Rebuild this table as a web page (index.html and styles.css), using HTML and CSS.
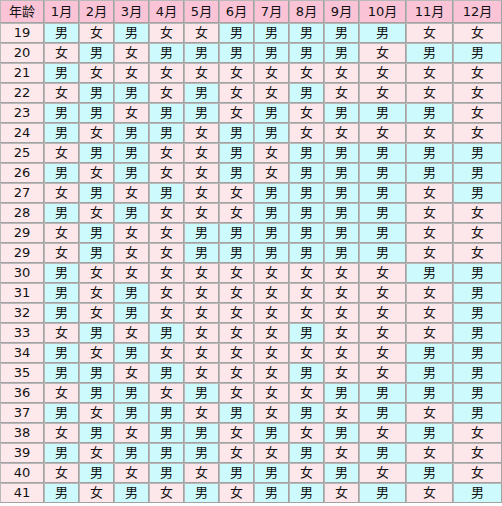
FILE: index.html
```html
<!DOCTYPE html>
<html lang="zh-CN">
<head>
<meta charset="utf-8">
<title>生男生女表</title>
<link rel="stylesheet" href="styles.css">
</head>
<body>
<table class="chart">
<colgroup>
<col class="c-age"><col class="c-m"><col class="c-m"><col class="c-m"><col class="c-m"><col class="c-m"><col class="c-m"><col class="c-m"><col class="c-m"><col class="c-m"><col class="c-w"><col class="c-w"><col class="c-x">
</colgroup>
<thead>
<tr class="head"><th>年龄</th><th>1月</th><th>2月</th><th>3月</th><th>4月</th><th>5月</th><th>6月</th><th>7月</th><th>8月</th><th>9月</th><th>10月</th><th>11月</th><th>12月</th></tr>
</thead>
<tbody>
<tr><td class="age">19</td><td class="m">男</td><td class="f">女</td><td class="m">男</td><td class="f">女</td><td class="f">女</td><td class="m">男</td><td class="m">男</td><td class="m">男</td><td class="m">男</td><td class="m">男</td><td class="f">女</td><td class="f">女</td></tr>
<tr><td class="age">20</td><td class="f">女</td><td class="m">男</td><td class="f">女</td><td class="m">男</td><td class="m">男</td><td class="m">男</td><td class="m">男</td><td class="m">男</td><td class="m">男</td><td class="f">女</td><td class="m">男</td><td class="m">男</td></tr>
<tr><td class="age">21</td><td class="m">男</td><td class="f">女</td><td class="f">女</td><td class="f">女</td><td class="f">女</td><td class="f">女</td><td class="f">女</td><td class="f">女</td><td class="f">女</td><td class="f">女</td><td class="f">女</td><td class="f">女</td></tr>
<tr><td class="age">22</td><td class="f">女</td><td class="m">男</td><td class="m">男</td><td class="f">女</td><td class="m">男</td><td class="f">女</td><td class="f">女</td><td class="m">男</td><td class="f">女</td><td class="f">女</td><td class="f">女</td><td class="f">女</td></tr>
<tr><td class="age">23</td><td class="m">男</td><td class="m">男</td><td class="f">女</td><td class="m">男</td><td class="m">男</td><td class="f">女</td><td class="m">男</td><td class="f">女</td><td class="m">男</td><td class="m">男</td><td class="m">男</td><td class="f">女</td></tr>
<tr><td class="age">24</td><td class="m">男</td><td class="f">女</td><td class="m">男</td><td class="m">男</td><td class="f">女</td><td class="m">男</td><td class="m">男</td><td class="f">女</td><td class="f">女</td><td class="f">女</td><td class="f">女</td><td class="f">女</td></tr>
<tr><td class="age">25</td><td class="f">女</td><td class="m">男</td><td class="m">男</td><td class="f">女</td><td class="f">女</td><td class="m">男</td><td class="f">女</td><td class="m">男</td><td class="m">男</td><td class="m">男</td><td class="m">男</td><td class="m">男</td></tr>
<tr><td class="age">26</td><td class="m">男</td><td class="f">女</td><td class="m">男</td><td class="f">女</td><td class="f">女</td><td class="m">男</td><td class="f">女</td><td class="m">男</td><td class="m">男</td><td class="m">男</td><td class="m">男</td><td class="m">男</td></tr>
<tr><td class="age">27</td><td class="f">女</td><td class="m">男</td><td class="f">女</td><td class="m">男</td><td class="f">女</td><td class="f">女</td><td class="m">男</td><td class="m">男</td><td class="m">男</td><td class="m">男</td><td class="f">女</td><td class="m">男</td></tr>
<tr><td class="age">28</td><td class="m">男</td><td class="f">女</td><td class="m">男</td><td class="f">女</td><td class="f">女</td><td class="f">女</td><td class="m">男</td><td class="m">男</td><td class="m">男</td><td class="m">男</td><td class="f">女</td><td class="f">女</td></tr>
<tr><td class="age">29</td><td class="f">女</td><td class="m">男</td><td class="f">女</td><td class="f">女</td><td class="m">男</td><td class="m">男</td><td class="m">男</td><td class="m">男</td><td class="m">男</td><td class="m">男</td><td class="f">女</td><td class="f">女</td></tr>
<tr><td class="age">29</td><td class="f">女</td><td class="m">男</td><td class="f">女</td><td class="f">女</td><td class="m">男</td><td class="m">男</td><td class="m">男</td><td class="m">男</td><td class="m">男</td><td class="m">男</td><td class="f">女</td><td class="f">女</td></tr>
<tr><td class="age">30</td><td class="m">男</td><td class="f">女</td><td class="f">女</td><td class="f">女</td><td class="f">女</td><td class="f">女</td><td class="f">女</td><td class="f">女</td><td class="f">女</td><td class="f">女</td><td class="m">男</td><td class="m">男</td></tr>
<tr><td class="age">31</td><td class="m">男</td><td class="f">女</td><td class="m">男</td><td class="f">女</td><td class="f">女</td><td class="f">女</td><td class="f">女</td><td class="f">女</td><td class="f">女</td><td class="f">女</td><td class="f">女</td><td class="m">男</td></tr>
<tr><td class="age">32</td><td class="m">男</td><td class="f">女</td><td class="m">男</td><td class="f">女</td><td class="f">女</td><td class="f">女</td><td class="f">女</td><td class="f">女</td><td class="f">女</td><td class="f">女</td><td class="f">女</td><td class="m">男</td></tr>
<tr><td class="age">33</td><td class="f">女</td><td class="m">男</td><td class="f">女</td><td class="m">男</td><td class="f">女</td><td class="f">女</td><td class="f">女</td><td class="m">男</td><td class="f">女</td><td class="f">女</td><td class="f">女</td><td class="m">男</td></tr>
<tr><td class="age">34</td><td class="m">男</td><td class="f">女</td><td class="m">男</td><td class="f">女</td><td class="f">女</td><td class="f">女</td><td class="f">女</td><td class="f">女</td><td class="f">女</td><td class="f">女</td><td class="m">男</td><td class="m">男</td></tr>
<tr><td class="age">35</td><td class="m">男</td><td class="m">男</td><td class="f">女</td><td class="m">男</td><td class="f">女</td><td class="f">女</td><td class="f">女</td><td class="m">男</td><td class="f">女</td><td class="f">女</td><td class="m">男</td><td class="m">男</td></tr>
<tr><td class="age">36</td><td class="f">女</td><td class="m">男</td><td class="m">男</td><td class="f">女</td><td class="m">男</td><td class="f">女</td><td class="f">女</td><td class="f">女</td><td class="m">男</td><td class="m">男</td><td class="m">男</td><td class="m">男</td></tr>
<tr><td class="age">37</td><td class="m">男</td><td class="f">女</td><td class="m">男</td><td class="m">男</td><td class="f">女</td><td class="m">男</td><td class="f">女</td><td class="m">男</td><td class="f">女</td><td class="m">男</td><td class="f">女</td><td class="m">男</td></tr>
<tr><td class="age">38</td><td class="f">女</td><td class="m">男</td><td class="f">女</td><td class="m">男</td><td class="m">男</td><td class="f">女</td><td class="m">男</td><td class="f">女</td><td class="m">男</td><td class="f">女</td><td class="m">男</td><td class="f">女</td></tr>
<tr><td class="age">39</td><td class="m">男</td><td class="f">女</td><td class="m">男</td><td class="m">男</td><td class="m">男</td><td class="f">女</td><td class="f">女</td><td class="m">男</td><td class="f">女</td><td class="m">男</td><td class="f">女</td><td class="f">女</td></tr>
<tr><td class="age">40</td><td class="f">女</td><td class="m">男</td><td class="f">女</td><td class="m">男</td><td class="f">女</td><td class="m">男</td><td class="m">男</td><td class="f">女</td><td class="m">男</td><td class="f">女</td><td class="m">男</td><td class="f">女</td></tr>
<tr><td class="age">41</td><td class="m">男</td><td class="f">女</td><td class="m">男</td><td class="f">女</td><td class="m">男</td><td class="f">女</td><td class="m">男</td><td class="m">男</td><td class="f">女</td><td class="m">男</td><td class="f">女</td><td class="m">男</td></tr>
</tbody>
</table>
</body>
</html>
```
FILE: styles.css
```css
html, body {
  margin: 0;
  padding: 0;
  background: #ffffff;
}

.chart {
  width: 502px;
  table-layout: fixed;
  border-collapse: separate;
  border-spacing: 0;
  font-family: "DejaVu Sans", "Noto Sans CJK SC", sans-serif;
  font-size: 13px;
  color: #111111;
}

.c-age { width: 44px; }
.c-m { width: 35px; }
.c-w { width: 47px; }
.c-x { width: 49px; }

.chart th,
.chart td {
  padding: 0;
  text-align: center;
  vertical-align: middle;
  border: 1px solid #a2a2a2;
  border-top-color: #b8b8b8;
  border-left-color: #b8b8b8;
  font-weight: normal;
  line-height: 16px;
}

.head th {
  height: 21px;
  background: #fac3d6;
}

.chart td {
  height: 18px;
}

.age {
  background: #fde9ec;
}

.m {
  background: #cdfbfd;
}

.f {
  background: #fee7ea;
}
```
